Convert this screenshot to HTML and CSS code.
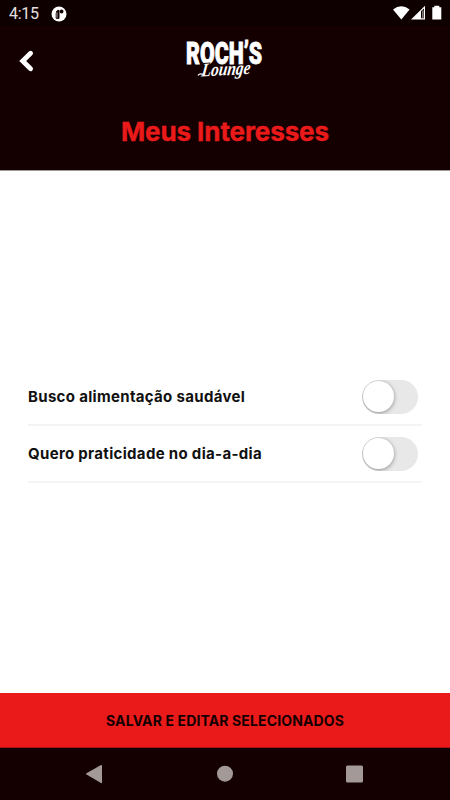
FILE: index.html
```html
<!DOCTYPE html>
<html lang="pt-BR">
<head>
<meta charset="utf-8">
<title>Meus Interesses</title>
<link rel="stylesheet" href="styles.css">
</head>
<body>
<div class="screen">
  <div class="status">
    <span class="time">4:15</span>
    <svg class="app-mark" width="16" height="16" viewBox="0 0 16 16"><circle cx="8" cy="8" r="7.5" fill="#fff"/><path d="M5.2 12.300V7.200Q5.200 4.300 8 4.200V12.300Z" fill="#100000" stroke="#100000"/><path d="M6 6.300v5.500" stroke="#ccc" stroke-width=".8"/><circle cx="10.600" cy="5.500" r="1.900" fill="#100000"/></svg>
    <svg class="signals" width="50" height="16" viewBox="0 0 50 16"><path d="M0 4.400Q8.300-1.900 16.600 4.400L8.300 14.500Z" fill="#fff"/><path d="M18 14.500L32 .8V14.500Z" fill="#fff"/><path d="M28 6.200L31 3.400V13.300H28Z" fill="#100000"/><path d="M29.300 5.500h1.200v7.500h-1.200z" fill="#aaa"/><path d="M39.300 2.200h2V.8h5v1.400h2v12.300h-9z" fill="#fff"/></svg>
  </div>
  <header class="header">
    <div class="toolbar">
      <svg class="back" width="16" height="24" viewBox="0 0 16 24"><path d="M11.600 4.300L3.700 12l7.900 7.700" fill="none" stroke="#fff" stroke-width="4.800" stroke-linecap="round" stroke-linejoin="miter"/></svg>
      <svg class="logo" width="80" height="46" viewBox="0 0 80 46">
        <text class="logo-name" transform="translate(2 27) scale(.74 1)" textLength="103" lengthAdjust="spacingAndGlyphs">ROCH’S</text>
        <text class="logo-sub" transform="translate(17 39.500) rotate(-3) skewX(-10)" textLength="49" lengthAdjust="spacingAndGlyphs">Lounge</text>
        <path d="M14 38.500q2-3 6-.5" fill="none" stroke="#fff" stroke-width="1.300"/>
      </svg>
    </div>
    <h1 class="title">Meus Interesses</h1>
  </header>
  <main class="list">
    <div class="row"><span class="label">Busco alimentação saudável</span><span class="switch"><span class="knob"></span></span></div>
    <div class="row"><span class="label">Quero praticidade no dia-a-dia</span><span class="switch"><span class="knob"></span></span></div>
  </main>
  <button class="save">SALVAR E EDITAR SELECIONADOS</button>
  <nav class="nav">
    <svg width="450" height="52" viewBox="0 0 450 52" fill="#a39999"><path d="M102 17.500v17q0 1-1 .6L86.500 26.600q-1-.8 0-1.400L101 17q1-.4 1 .5Z"/><circle cx="225" cy="25.700" r="8"/><rect x="346" y="17.500" width="17" height="17" rx="1.500"/></svg>
  </nav>
</div>
</body>
</html>
```
FILE: styles.css
```css
* { box-sizing: border-box; }
body { margin: 0; background: #fff; font-family: Inter, Roboto, sans-serif; }
.screen { width: 450px; height: 800px; display: flex; flex-direction: column; overflow: hidden; }
.status { height: 26px; background: #0f0000; display: flex; align-items: center; padding: 0 8px 0 9px; flex: none; }
.time { width: 42px; font: 400 16px/26px Roboto, sans-serif; letter-spacing: -.3px; color: #e5e0e0; padding-top: 2px; }
.app-mark { margin-top: 1px; }
.signals { margin-left: auto; margin-right: -1px; }
.header { height: 145px; background: #140000; border-bottom: 1px solid #9d9999; flex: none; }
.toolbar { height: 70px; display: flex; align-items: center; padding-left: 19px; }
.back { margin-right: 149px; }
.logo { margin-top: -2px; overflow: visible; }
.logo-name { font: 900 32px Roboto, sans-serif; fill: #fff; stroke: #fff; stroke-width: .9px; }
.logo-sub { font: italic 700 19px "Liberation Serif", serif; fill: #fff; stroke: #140000; stroke-width: 2px; paint-order: stroke; }
.title { margin: 20px 0 0; font-size: 26px; line-height: 32px; font-weight: 700; color: #ea1a1a; text-align: center; letter-spacing: -.1px; -webkit-text-stroke: .4px #ea1a1a; }
.list { flex: 1; display: flex; flex-direction: column; justify-content: center; padding: 0 28px 12px; }
.row { height: 57px; border-bottom: 2px solid #f4f4f4; display: flex; align-items: center; justify-content: space-between; padding-right: 4px; }
.label { font-size: 15px; line-height: 20px; font-weight: 700; color: #111; white-space: nowrap; letter-spacing: .32px; }
.switch { width: 56px; height: 34px; border-radius: 17px; background: #e8e8e8; overflow: hidden; padding: 1px; }
.knob { display: block; width: 31px; height: 31px; border-radius: 50%; background: #fff; box-shadow: 0 1px 4px rgba(0,0,0,.4); }
.save { height: 55px; flex: none; border: 0; border-bottom: 1px solid #a81313; background: #ea1a1a; color: #140000; font: 700 14px/20px Inter, Roboto, sans-serif; letter-spacing: .13px; padding: 1px 0 0; }
.nav { height: 52px; background: #140000; flex: none; }
.nav svg { display: block; }
```
